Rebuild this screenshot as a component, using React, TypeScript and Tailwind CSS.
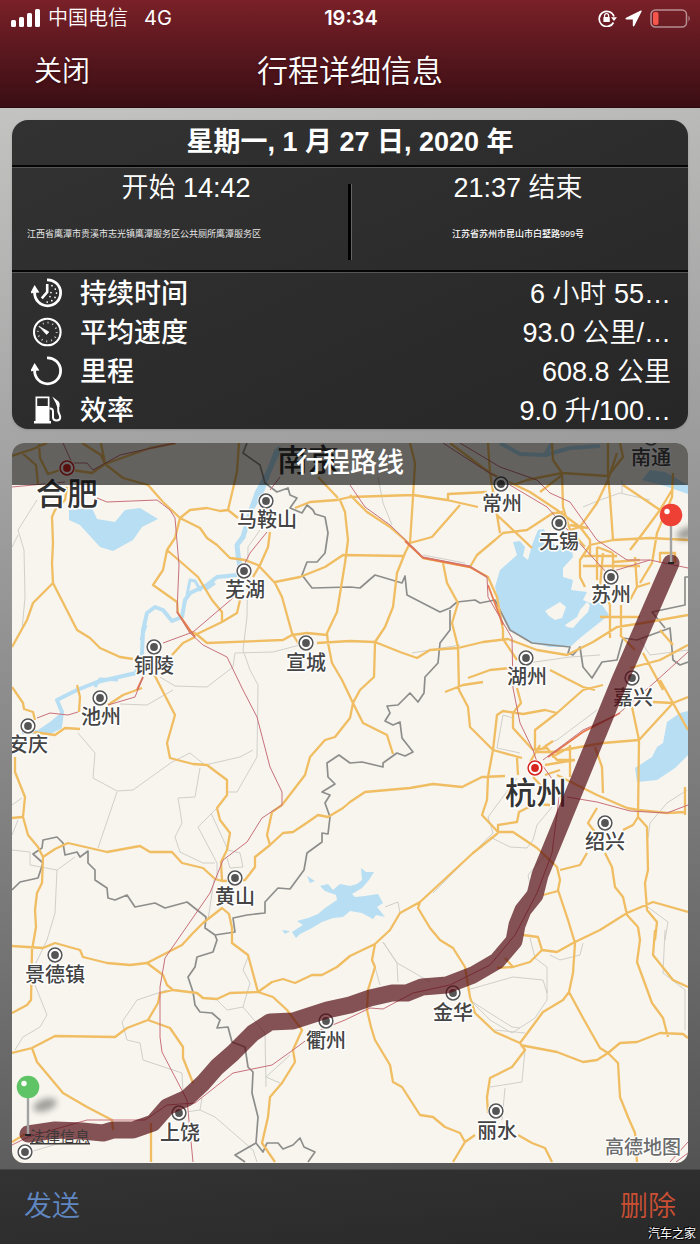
import { Fragment } from "react";

type Stat = {
  label: string;
  value: string;
  icon: "clock" | "gauge" | "loop" | "fuel";
};

type City = {
  name: string;
  x: number;
  y: number;
  labelX: number;
  labelY: number;
  kind?: "capital";
};

const stats: Stat[] = [
  { label: "持续时间", value: "6 小时 55…", icon: "clock" },
  { label: "平均速度", value: "93.0 公里/…", icon: "gauge" },
  { label: "里程", value: "608.8 公里", icon: "loop" },
  { label: "效率", value: "9.0 升/100…", icon: "fuel" },
];

const cities: City[] = [
  { name: "合肥", x: 67, y: 468, labelX: 67, labelY: 505, kind: "capital" },
  { name: "杭州", x: 535, y: 768, labelX: 536, labelY: 804, kind: "capital" },
  { name: "马鞍山", x: 266, y: 501, labelX: 267, labelY: 527 },
  { name: "芜湖", x: 244, y: 571, labelX: 245, labelY: 597 },
  { name: "铜陵", x: 154, y: 647, labelX: 154, labelY: 673 },
  { name: "宣城", x: 306, y: 643, labelX: 306, labelY: 670 },
  { name: "池州", x: 100, y: 698, labelX: 101, labelY: 724 },
  { name: "安庆", x: 28, y: 726, labelX: 28, labelY: 752 },
  { name: "黄山", x: 235, y: 878, labelX: 235, labelY: 904 },
  { name: "景德镇", x: 55, y: 955, labelX: 55, labelY: 982 },
  { name: "衢州", x: 326, y: 1021, labelX: 326, labelY: 1048 },
  { name: "上饶", x: 179, y: 1113, labelX: 180, labelY: 1140 },
  { name: "金华", x: 453, y: 993, labelX: 453, labelY: 1020 },
  { name: "丽水", x: 496, y: 1111, labelX: 497, labelY: 1138 },
  { name: "绍兴", x: 605, y: 823, labelX: 605, labelY: 849 },
  { name: "嘉兴", x: 632, y: 678, labelX: 633, labelY: 705 },
  { name: "湖州", x: 526, y: 658, labelX: 527, labelY: 684 },
  { name: "苏州", x: 611, y: 577, labelX: 611, labelY: 602 },
  { name: "无锡", x: 559, y: 523, labelX: 559, labelY: 549 },
  { name: "常州", x: 501, y: 484, labelX: 502, labelY: 511 },
  { name: "南通", x: 651, y: 438, labelX: 651, labelY: 465 },
];

const minorRoads = [
  "M37 500L18 530L24 550L25 597L22 630M12 547L18 535",
  "M260 530L248 547L247 617L243 650L250 670L258 685L257 757L237 792L228 792",
  "M300 645L273 652L235 653L233 667L207 687L175 686L160 677",
  "M120 704L147 705L173 690M78 733L95 753L93 778L117 791L133 790L172 762L190 753L205 765L240 757L253 750",
  "M117 792L98 848M200 768L195 797L178 798L182 823L175 837L180 852L203 863L215 863",
  "M217 808L198 827L217 863V880M211 813L228 850L240 853L243 867L230 868L227 858M214 880L208 920",
  "M12 850L30 852V865L57 870L75 857M57 870L55 913L47 940L35 965M12 805L22 798M12 835L18 820",
  "M35 985L47 1015L40 1027L23 1037L15 1050",
  "M167 990L137 1000L122 1022L127 1040L140 1043L143 1060L182 1073L183 1093",
  "M248 957L243 970L250 983L243 1007M217 1000L227 1010L243 1007L265 1033L266 1087M266 1077L290 1055M266 1077L280 1083",
  "M30 1152L87 1135M178 1113L200 1110L215 1117L253 1150L257 1162M200 1110L202 1098",
  "M375 967L380 985M383 942L397 963L398 982M383 942L397 963L413 972L430 982",
  "M467 990L513 977L543 980L547 993V967L535 958L530 938M470 1000L490 1020L512 1033L535 1018L547 1000V990M470 1000L485 1010L512 1027L520 1028M495 1030L525 1033",
  "M525 1050L522 1082L490 1087M505 1088L502 1120M550 955L560 960L580 955L583 943",
  "M665 930L663 973L685 990V1030M645 905L668 922L665 940",
  "M490 837L510 847L527 848L533 840L537 825L552 807M517 778L488 817L493 833L433 893M545 855L528 875L530 885",
  "M597 710L557 740L545 745M503 715L497 748L520 753M513 718L503 715",
  "M687 790L667 803L650 823L648 838M378 477L383 503L392 525M583 507L600 500L620 493L650 500M622 480V493",
  "M423 555L465 563M412 653L460 645M528 663L570 657L600 655M640 640L650 655L688 650",
  "M385 907L398 902L400 913",
];

const roads = [
  "M12 456L33 449L47 443M21 452L36 465L38 484M39 444L40 458L48 474L60 470",
  "M82 443L101 455L105 464L92 473L72 470M101 443L105 464M176 443L150 448L105 464",
  "M105 464L123 478L148 485L163 502L180 518L200 528L207 538L217 545L230 558L245 560L258 565L275 583L282 597L292 633L301 648",
  "M180 518L190 510L207 508L220 511L228 510L238 518M228 510L232 493L237 472L239 443",
  "M180 518L175 538L167 550L163 570L153 585L177 602L178 613L190 632L195 633",
  "M167 550L182 563L198 577L212 600L222 612V622M195 635L222 622L237 613L240 600",
  "M195 633L207 643L283 640L292 635L307 633L327 635M172 655L183 643L195 637",
  "M253 577L260 565L268 547L270 532M275 582L300 577L325 567L343 555L403 556",
  "M340 500L345 512L348 540L345 563L337 612L327 633L328 643L332 663L342 680L353 703M317 643L350 641",
  "M295 508L310 502L337 500L350 497L413 495L447 500L478 507M318 477L338 498",
  "M67 487L65 500L55 510L52 517L53 543L52 563L53 583L77 630L90 638L100 648L120 657L133 659M53 583L33 603L27 620L12 647",
  "M152 670L157 680L175 715L167 743L170 758L193 764L207 765L227 780V795L217 808L220 820L230 833L227 850L221 862L222 880",
  "M12 687L23 703L24 709L33 712L35 720M77 685L80 697L79 712M33 732L55 735L65 728L80 729M142 688L123 695L108 705",
  "M15 757V772L25 797L23 817L28 835L38 847L43 857L42 883L37 893L35 910L36 927L32 950L31 1000L27 1005L12 1013M12 818L22 817",
  "M43 857L55 849L68 843L107 852L140 846L150 852L172 852L182 863L203 868L215 879L222 881L245 880L255 867V857L270 845L283 833L293 832L308 822L318 815L328 817L343 808L350 802L365 792L410 788L433 784L462 787L482 777L505 776",
  "M270 845L267 835L272 812L282 805L305 775L310 757L325 740L335 737L350 718L353 703L360 690L374 677L375 643M353 703L363 723L387 735L393 754",
  "M350 641L375 642L400 652L417 658L430 650L458 648L483 642L508 639L537 650L567 655L593 642L617 627L643 623L688 615",
  "M375 642L385 627L393 607L397 573L405 553L410 543L413 497L415 463L410 443M410 543L432 537L460 505",
  "M350 495L367 512L390 527L405 540L423 558L470 567L488 577L497 597L503 630V639L517 660",
  "M470 567L477 555L495 540L503 533L527 530L553 513L563 512M490 473L497 515L500 533M497 515L513 530L532 548",
  "M443 563L447 583L458 603L452 623L458 647L459 690L468 707L470 727L493 750L522 758M445 692L463 685L483 682M468 678L490 670L510 668",
  "M493 750L497 715L503 711L523 714L545 710L557 713L583 690L603 685M517 688L521 703L513 713V728L533 750M550 670L583 687L595 690",
  "M493 750L488 777L487 800L482 815L498 832L513 832L537 848L557 867L560 880L558 890L568 920L575 943L573 973L569 992L583 1018L600 1048L608 1053L618 1063L620 1097L628 1117L635 1133L637 1162",
  "M498 832V825L517 822L519 812L535 804L550 805M498 833L473 853L433 890L420 902L400 913L390 930L375 944L350 956L337 967L322 975L312 975L295 983L283 979L272 982L258 992",
  "M420 902L418 908L430 928L440 940L453 948L465 967L470 997L475 1013L495 1032L520 1043",
  "M375 944L372 960L375 967L368 990L367 1010L371 1027L375 1040L390 1065L393 1082L402 1087L420 1115L433 1117L445 1127L460 1133L465 1142L453 1162M465 1142L475 1135",
  "M518 1135L532 1143L545 1148L552 1162M520 1043L543 1012L563 1000L569 992M520 1043L525 1050L512 1067L490 1078L487 1097L488 1113",
  "M520 1045L557 1052L583 1062L597 1060L608 1053L620 1043L637 1042L660 1033L683 1034L688 1038",
  "M638 927L640 940L637 962L652 1003L663 1018L668 1037M655 930L653 955L673 980L688 987",
  "M523 935L538 937L542 950L557 952L573 943L600 930L627 913L653 902L688 912M542 950L530 962L513 967L497 968M505 958L513 967",
  "M597 808L588 823L595 832M560 870L580 865L587 853M605 853L612 867L615 887L623 897L627 915L638 927",
  "M623 830L633 825L638 817L647 827L648 870L645 883L647 910L657 922L655 940M638 817L639 740L632 707",
  "M639 740L673 703L688 697M535 752L553 752L580 747L603 743L639 740M545 765L575 760M557 775L597 795L627 808L638 810L667 813L685 812",
  "M595 747L602 767L603 793M570 745V777M653 702L673 703M660 680L673 703L688 730M685 787V815",
  "M517 758L518 775M533 750L547 748L557 760L575 760M535 751V730L557 713M543 748L553 741M533 777L545 790M552 757L570 747M530 762L540 745M545 775L560 770",
  "M543 895L558 891M12 946L43 948L55 943L80 950L83 957L107 963L130 965L147 963L182 945L193 933L203 923L222 908L229 914L232 928V943L248 955L258 992",
  "M147 963L163 975L167 985L173 990L197 993L203 998L217 999L230 993L258 992L273 997L287 1010L302 1030L293 1050L295 1062L282 1083L270 1097L268 1117L262 1143L275 1162",
  "M173 990L160 993L158 1003L148 1020L127 1028L115 1037L55 1036L32 1048L12 1053M148 1020L170 1028L183 1047V1058L193 1083",
  "M32 1048L37 1062L63 1093L87 1107L112 1120L113 1130M12 1142L25 1134M151 1123V1162",
  "M552 443L553 460L562 473L563 507L570 530L585 547M513 485L527 480L562 473L608 476L623 457L620 443M608 443V476",
  "M450 443L490 473L530 492L557 510L580 527L590 540V557M488 443L490 473M448 500V494L487 492M540 492L562 475",
  "M608 476L610 497L613 540L590 545M613 540L650 538L688 540M617 453L608 480L597 503L580 527L570 530",
  "M673 473L672 497L657 533L652 563L640 583M623 485L660 510L672 490M630 550L643 533L660 510M570 525L588 528",
  "M583 556H617M583 566H640M590 545L580 560V577L585 587M597 547V580M603 553L600 587M613 553V570M635 557L637 587L650 583M597 547L613 553M640 560L613 562",
  "M610 605V638M621 605V635M600 617H640M660 563V553H675V563M630 600L637 587M603 590L610 605",
  "M630 668L660 660L688 645M643 653L663 690M660 630L673 645M620 635L635 650",
];

const rails = [
  "M63 443L72 463L87 463L93 470L120 455L175 443M12 487L65 482",
  "M97 498L107 502L157 500L170 510L175 518L179 565L177 612L190 633L203 645L227 657L243 690L257 717L270 767L282 792V805L262 818L247 842L223 860L210 893L165 958L160 987V1037L162 1052L187 1100L193 1162",
  "M163 643L193 632L233 598M245 563L250 553L267 532M270 490L280 477",
  "M143 677L141 682L135 697L108 705M78 712L68 715L50 713L37 718",
  "M350 485L365 507L390 525L423 557L470 566L487 577L488 597L512 638L513 688L520 723L533 750L538 765",
  "M443 443L480 467L510 485L547 507L583 547L607 573L650 560",
  "M460 443L500 467L537 480L550 493L570 502L597 540L627 560L650 560L688 568",
  "M543 760L583 730L617 715L655 682L688 652M567 797L597 802L630 811L667 813L688 805",
  "M540 762L560 790L552 853L537 893L515 935L490 965L450 985L413 993",
  "M12 1145L28 1137L87 1120L145 1120L167 1105L195 1103L233 1073L272 1065L293 1050L320 1030L345 1020L370 1008L383 1009L413 993M670 1162L688 1142M676 1162L688 1153",
];

const redRoads = [
  "M177 612L195 637M143 677L137 690M405 541L423 558L470 567L487 577",
  "M548 757L583 732L620 713M488 585L503 625",
];

const borders = [
  "M247 443L243 453L260 465L265 483L277 492L288 488L290 495L297 498L290 508L302 513L307 505L313 510L315 514L325 517L328 533L325 553L317 562L307 562L302 575L312 588L350 587L360 588L375 575L402 583L405 576L407 595L440 612L450 608L457 602L475 600L480 603L495 600L510 630L532 643L570 647L568 653L573 655L580 647L583 667L592 678L602 662L617 660L623 638L637 640L670 628L673 660L680 665L688 662",
  "M688 577H685V605L652 612L665 628",
  "M450 610V630L440 643L438 663L425 677L424 693L418 702L410 693L398 705L387 706L390 713L385 721L393 725L400 722L402 738L413 752L405 756L397 753L383 763L383 767L362 762L350 763L339 755L327 763L328 777L335 784L322 792L330 795L325 803L330 817L328 834L322 833V842L307 853L304 870L290 889L278 888L265 902V913L247 915L233 918L235 932L215 935L205 928L206 917L187 902L165 908L155 903L135 907L127 895L115 900L108 898L107 888L95 880V870L88 863V851L80 857L77 852L65 855L63 843L57 837L43 840L42 848L33 854L43 863L38 878L20 882L12 890",
  "M215 935L217 940L213 952L197 957L195 967L188 977L193 992L195 1005L200 1012L212 1013L220 1020L217 1028L228 1027L232 1042L245 1047L248 1067L253 1072L252 1093L258 1117L256 1143L235 1155L245 1162",
  "M256 1143L263 1152L267 1143L278 1143L283 1149L293 1145L300 1138L304 1147L315 1152L308 1162",
];

const lakes = [
  "M69 510L92 508L97 519L115 522L125 510L140 508L158 519L142 527L133 540L113 551L100 547L80 525L69 520Z",
  "M513 542L520 541L525 547L523 556L528 560L532 545L538 530L544 529L550 543L572 551L573 557L563 568V577L573 580L571 590L587 592L583 600L590 603L600 602L609 615L590 630L580 638L570 647L550 647L532 643L510 630L500 607L495 587L500 570L517 555Z",
  "M688 711L680 713L667 722L663 743L657 747L652 757L635 768L637 782L657 780L675 768L688 755Z",
  "M307 876L315 881L310 883ZM320 886L328 884L333 890L340 884L350 886L357 884L362 880L361 868L366 872L374 872L369 880L362 888L352 894L355 897L365 896L378 894L383 903L377 907L385 917L376 915L373 919L362 913L350 911L343 917L333 918L322 922L312 928L300 934L296 938L292 932L303 925L297 921L308 918L318 914L325 908L337 900L336 895L325 891ZM282 930L290 931L285 934Z",
  "M642 480L650 470L665 472L688 485V494L665 486Z",
  "M35 732L50 722L62 712V727L50 734Z",
];

const ROUTE =
  "M671 563L620 680L540 875L535 895L523 910L517 925L514 941L497 961L473 975L447 985L422 987L407 993L392 993L370 998L350 1005L327 1010L293 1021L270 1022L253 1033L233 1053L217 1067L203 1083L187 1098L167 1107L153 1123L133 1130L113 1130L103 1133L82 1131L55 1130L28 1134";

function StatIcon({ name }: { name: Stat["icon"] }) {
  return (
    <svg viewBox="0 0 32 30" className="w-8 h-[30px] shrink-0" fill="none" stroke="#fff" aria-hidden="true">
      {(name === "clock" || name === "loop") && (
        <>
          <path d="M16 1.8A13 13 0 1 1 3.6 14.5" strokeWidth="2.8" />
          <path d="M3.6 7L8.4 14.4L-.8 15.2Z" fill="#fff" stroke="none" />
        </>
      )}
      {name === "clock" && (
        <>
          <path d="M16.2 6V14L10.8 20.4" strokeWidth="2.6" />
          <path
            d="M21 7.6v.1M24.3 11v.1M25.5 15v.1M24 19.4v.1M20.8 22.6v.1M16.2 24v.1M20 14.5v.1M19 18.5v.1"
            strokeWidth="1.7"
            strokeLinecap="round"
          />
        </>
      )}
      {name === "gauge" && (
        <>
          <circle cx="16.3" cy="15" r="13.3" strokeWidth="2.1" />
          <circle cx="16.3" cy="15" r="9.4" strokeWidth="2" strokeDasharray="1 3.92" opacity=".75" />
          <path d="M8.4 9.6L17.8 15L15.6 17.4Z" fill="#fff" stroke="#fff" strokeWidth=".8" />
        </>
      )}
      {name === "fuel" && (
        <>
          <path d="M4.5 1.5H18.5V26H20V28.5H3V26H4.5Z" fill="#fff" stroke="none" />
          <path d="M6.2 3.2H16.8V11H6.2Z" fill="#2b2b2b" stroke="none" />
          <path
            d="M18.5 13.5C21.6 13.2 22 15 22 17V22.5C22.2 26.6 29 26.6 29.2 22.5C29.2 19 26.6 18.5 27.2 13.5V7.5"
            strokeWidth="2"
          />
          <path d="M21.2 1.4L27.6 6.4Q28.8 7.8 28.4 12H26.2L24.6 7.8Z" fill="#fff" stroke="none" />
        </>
      )}
    </svg>
  );
}

function Pin({ x, y, fill }: { x: number; y: number; fill: string }) {
  return (
    <g>
      <ellipse
        cx={x + 17}
        cy={y + 18}
        rx="12"
        ry="6"
        fill="#000"
        opacity=".35"
        filter="url(#soft)"
        transform={`rotate(-18 ${x + 17} ${y + 18})`}
      />
      <path d={`M${x - 3} ${y + 48}h6`} stroke="#222" strokeWidth="2" />
      <path d={`M${x} ${y + 8}v39`} stroke="#a3a3a3" strokeWidth="2.4" />
      <circle cx={x} cy={y} r="11.3" fill={fill} />
      <circle cx={x - 4} cy={y - 3.5} r="2.7" fill="#fff" />
    </g>
  );
}

function Dot({ x, y, ink }: { x: number; y: number; ink: string }) {
  return (
    <Fragment>
      <circle cx={x} cy={y} r="8.6" fill="#fff" />
      <circle cx={x} cy={y} r="6.9" fill="#fff" stroke={ink} strokeWidth="1.5" />
      <circle cx={x} cy={y} r="3.9" fill={ink} />
    </Fragment>
  );
}

function CityName({ city }: { city: City }) {
  const capital = city.kind === "capital";
  return (
    <text
      x={city.labelX}
      y={city.labelY}
      textAnchor="middle"
      fontSize={capital ? 31 : 20}
      fill={capital ? "#333" : "#444"}
      stroke="#fff"
      strokeWidth="3"
      strokeLinejoin="round"
      paintOrder="stroke"
    >
      {city.name}
    </text>
  );
}

function RouteMap() {
  return (
    <svg
      viewBox="12 443 676 720"
      className="block w-full h-auto bg-[#f7f5ee] font-medium font-['Noto_Sans_CJK_SC',sans-serif]"
      role="img"
      aria-label="行程路线"
    >
      <defs>
        <filter id="soft" x="-50%" y="-80%" width="200%" height="260%">
          <feGaussianBlur stdDeviation="3" />
        </filter>
      </defs>

      <g fill="#b7def3">
        {lakes.map((d) => (
          <path key={d} d={d} />
        ))}
      </g>
      <g fill="none" stroke="#b7def3" strokeLinejoin="round">
        <path d="M280 447L268 473L257 493L250 513L243 537L237 545L238 555L240 567" strokeWidth="5" />
        <path d="M277 450L262 490L252 508" strokeWidth="5" />
        <path
          d="M237 575L217 577L207 585L190 593L185 600L182 617L172 621L163 610L155 607L147 613L143 630L142 653L136 673L97 682L77 690L57 700L62 712L60 727L50 732L22 732"
          strokeWidth="4"
        />
        <path d="M187 595L190 580L195 581L201 591M141 640L146 625M95 687L100 679L118 680M205 590L215 583" strokeWidth="3" />
        <path d="M500 443L520 454L545 455L570 448L600 446M552 443L545 455" strokeWidth="4" />
      </g>
      <g fill="#f7f5ee">
        <path d="M545 611L560 602L566 607L562 618L555 620L549 616Z" />
        <path d="M565 625L577 617L580 610L587 602L590 605L588 612L580 620L573 628L567 627Z" />
      </g>

      <path d={minorRoads.join("")} fill="none" stroke="#d0cfca" strokeWidth="1" />
      <path d={borders.join("")} fill="none" stroke="#8d8d8b" strokeWidth="1.7" strokeLinejoin="round" />
      <path d={roads.join("")} fill="none" stroke="#f0bd62" strokeWidth="2.3" strokeLinejoin="round" />
      <path d={redRoads.join("")} fill="none" stroke="#e8794b" strokeWidth="1.8" />
      <path d={rails.join("")} fill="none" stroke="#c9707b" strokeWidth="1" />

      {cities.map((city) => (
        <Dot key={city.name} x={city.x} y={city.y} ink={city.kind === "capital" ? "#d6261f" : "#555"} />
      ))}
      {cities.map((city) => (
        <CityName key={city.name} city={city} />
      ))}
      <text x="308" y="471" textAnchor="middle" fontSize="31" fill="#333">
        南京
      </text>

      <path
        d={ROUTE}
        fill="none"
        stroke="#520c13"
        strokeOpacity=".7"
        strokeWidth="17"
        strokeLinecap="round"
        strokeLinejoin="round"
      />

      <Dot x={25} y={1152} ink="#555" />
      <Pin x={28} y={1087} fill="#5fc465" />
      <Pin x={671} y={515} fill="#ee4035" />

      <a href="#legal">
        <text x="30" y="1142" fontSize="15" fontWeight="400" fill="#3f3a3a" textDecoration="underline">
          法律信息
        </text>
      </a>
      <text x="605" y="1154" fontSize="19" fill="#6c6c6c" stroke="#fff" strokeWidth="2" paintOrder="stroke">
        高德地图
      </text>
    </svg>
  );
}

function Divider() {
  return <div className="h-[3px] bg-[#050505] border-b border-[#555]" />;
}

export default function App() {
  return (
    <div className="relative flex flex-col min-h-screen bg-[linear-gradient(172deg,#c3c3c2_8%,#a6a6a6_32%,#7c7c7c_65%,#545454_94%)] text-white font-['Liberation_Sans','Noto_Sans_CJK_SC',sans-serif]">
      <header className="h-[108px] bg-linear-to-b from-[#7a2028] to-[#3a0e14] border-b border-[#2a0a0e]">
        <div className="grid grid-cols-3 items-center h-9 pl-[11px] pr-[9px]">
          <div className="flex items-center">
            <svg viewBox="0 0 29 18" className="w-[29px] h-[18px]" fill="#fff" aria-hidden="true">
              <rect x="0" y="11" width="5" height="7" rx="1.5" />
              <rect x="8" y="8" width="5" height="10" rx="1.5" />
              <rect x="16" y="4" width="5" height="14" rx="1.5" />
              <rect x="24" y="0" width="5" height="18" rx="1.5" />
            </svg>
            <span className="ml-2 text-xl leading-6 font-[350]">中国电信</span>
            <span className="ml-4 text-xl leading-6 font-[Inter,sans-serif]">4G</span>
          </div>
          <span className="text-center text-xl leading-6 font-semibold font-[Inter,sans-serif]">19:34</span>
          <div className="flex items-center justify-end gap-2">
            <svg viewBox="0 0 19 18" className="w-[19px] h-[18px]" fill="none" stroke="#fff" aria-hidden="true">
              <path d="M15.5 13.5A7.6 7.6 0 1 1 16 7.5" strokeWidth="1.7" />
              <path d="M13 8.3H19L16 12Z" fill="#fff" stroke="none" />
              <rect x="5.4" y="8" width="6.4" height="5" rx=".6" fill="#fff" stroke="none" />
              <path d="M6.6 8.4V6.7A2 2 0 0 1 10.6 6.7V8.4" strokeWidth="1.3" />
            </svg>
            <svg viewBox="0 0 17 17" className="w-[17px] h-[17px]" fill="#fff" aria-hidden="true">
              <path d="M15.8 .5Q17 .2 16.6 1.4L9.4 15.8Q8.2 17.2 7.8 15.4V9.4H1.4Q-.2 9 1 7.8Z" />
            </svg>
            <svg viewBox="0 0 41 19" className="w-[41px] h-[19px]" fill="none" aria-hidden="true">
              <rect x="1" y="1" width="35.5" height="17" rx="4.5" stroke="#fff" strokeOpacity=".5" strokeWidth="1.5" />
              <rect x="3" y="3" width="5.5" height="13" rx="2" fill="#f4564b" />
              <path d="M38.5 6.5Q41 9.5 38.5 12.5Z" fill="#fff" fillOpacity=".5" />
            </svg>
          </div>
        </div>
        <div className="grid grid-cols-[1fr_auto_1fr] items-center h-[72px] px-[34px]">
          <button type="button" className="justify-self-start text-[28px] leading-9 font-[350] text-shadow-md">
            关闭
          </button>
          <h1 className="text-[31px] leading-10 font-[350] text-shadow-md">行程详细信息</h1>
        </div>
      </header>

      <main className="flex-1 flex flex-col gap-[14px] px-3 pt-3 pb-[6px]">
        <section className="rounded-2xl overflow-hidden bg-linear-to-br from-[#323232] to-[#272727] shadow">
          <h2 className="h-[45px] text-center text-[27px] leading-[45px] font-bold">星期一, 1 月 27 日, 2020 年</h2>
          <Divider />
          <div className="grid grid-cols-[1fr_auto_1fr] h-[102px]">
            <div>
              <p className="pl-3 pt-1 text-center text-[27px] leading-8 font-[350]">开始 14:42</p>
              <p className="mt-[22px] pl-[15px] text-[9px] leading-4 whitespace-nowrap text-neutral-200">
                江西省鹰潭市贵溪市志光镇鹰潭服务区公共厕所鹰潭服务区
              </p>
            </div>
            <div className="my-4 w-1 h-[76px] bg-black border-r border-[#666]" />
            <div className="pr-1 text-center">
              <p className="pt-1 text-[27px] leading-8 font-[350]">21:37 结束</p>
              <p className="mt-[22px] text-[9px] leading-4 font-medium">江苏省苏州市昆山市白墅路999号</p>
            </div>
          </div>
          <Divider />
          <dl className="pl-[19px] pr-[17px]">
            {stats.map((stat) => (
              <div key={stat.label} className="flex items-center h-[39px]">
                <StatIcon name={stat.icon} />
                <dt className="ml-[17px] pt-[2px] text-[27px] leading-9 font-medium">{stat.label}</dt>
                <dd className="ml-auto pt-[2px] text-[27px] leading-9 font-[350]">{stat.value}</dd>
              </div>
            ))}
          </dl>
        </section>

        <section className="relative rounded-xl overflow-hidden">
          <RouteMap />
          <h2 className="absolute inset-x-0 top-0 h-[42px] bg-black/60 text-center text-[27px] leading-10 font-medium">
            行程路线
          </h2>
        </section>
      </main>

      <footer className="flex items-center justify-between h-[75px] px-6 border-t border-[#444] bg-linear-to-br from-[#333] to-[#292929]">
        <button type="button" className="text-[28px] leading-9 font-[350] text-[#6087c2]">
          发送
        </button>
        <button type="button" className="text-[28px] leading-9 font-[350] text-[#cb4f33]">
          删除
        </button>
      </footer>
      <span className="absolute right-1 bottom-0 text-xs leading-5 [text-shadow:1px_1px_0_#000,-1px_-1px_0_#000]">
        汽车之家
      </span>
    </div>
  );
}
